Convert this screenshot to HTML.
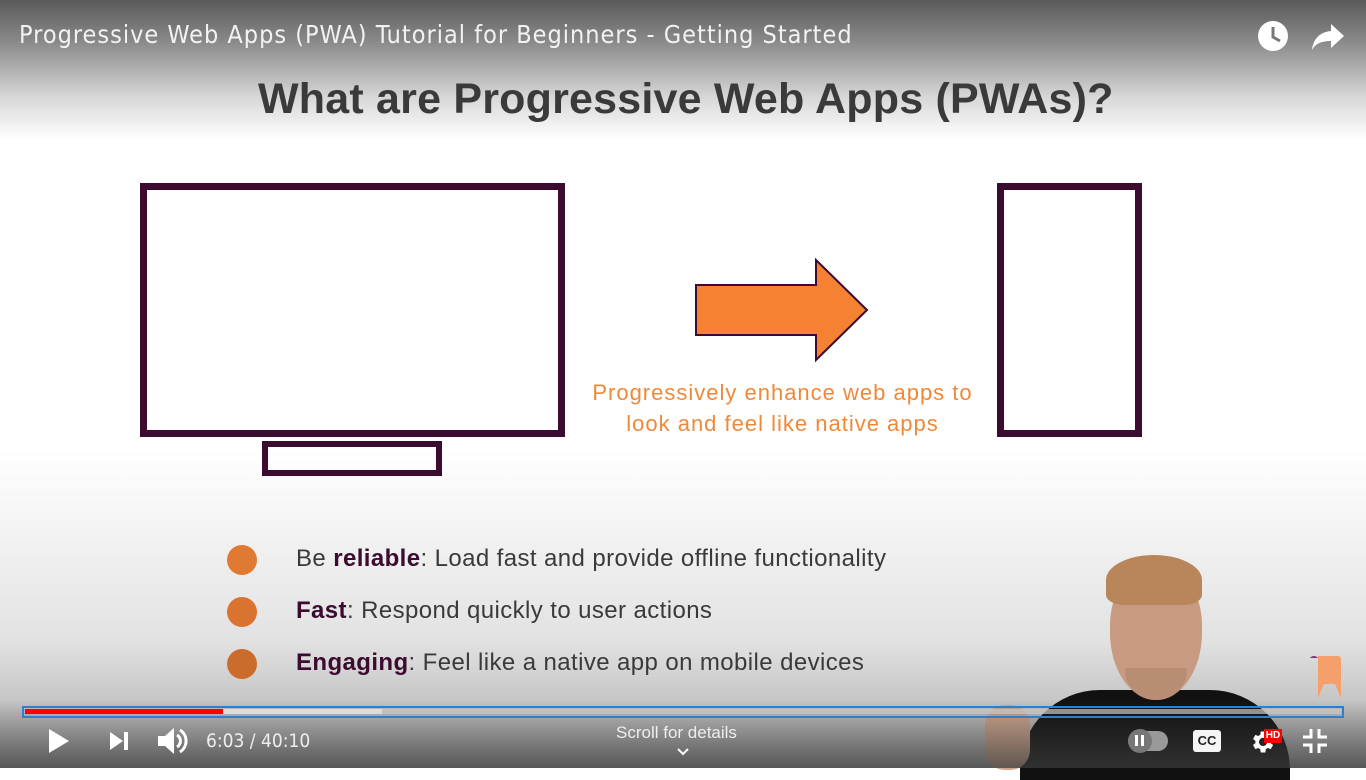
<!DOCTYPE html>
<html><head><meta charset="utf-8"><style>
*{margin:0;padding:0;box-sizing:border-box}
body{width:1366px;height:768px;overflow:hidden;position:relative;background:#fff;font-family:"Liberation Sans",sans-serif}
.abs{position:absolute}
.topg{left:0;top:0;width:1366px;height:140px;background:linear-gradient(#5a5a5a 0%,#8a8a8a 30%,#d8d8d8 70%,rgba(255,255,255,0) 100%)}
.slideg{left:0;top:450px;width:1366px;height:318px;background:linear-gradient(rgba(255,255,255,0),#e2e2e2 60%,#c4c4c4 80%,#aaa 100%)}
.botg{left:0;top:700px;width:1366px;height:68px;background:linear-gradient(rgba(60,60,60,0),rgba(60,60,60,.75))}
.title{left:19px;top:20px;color:#f2f2f2;font-size:25px;font-family:"DejaVu Sans Condensed","Liberation Sans",sans-serif;letter-spacing:1px}
h1{position:absolute;left:258px;top:75px;font-size:43px;font-weight:bold;color:#3a3a3a;letter-spacing:0.2px}
.pur{border:7px solid #3b0b30}
.cap{left:540px;width:485px;text-align:center;color:#f0883a;font-size:22px;line-height:31px;top:377px;letter-spacing:1px}
.li{left:296px;font-size:24px;color:#3a3a3a;letter-spacing:0.4px}
.li b{color:#3b0b30}
.dot{left:227px;width:30px;height:30px;border-radius:50%;background:#e07a33}
.ctl{color:#eee;font-size:19px}
</style></head><body>
<div class="abs topg"></div>
<div class="abs slideg"></div>
<div class="abs title">Progressive Web Apps (PWA) Tutorial for Beginners - Getting Started</div>
<svg class="abs" style="left:1256px;top:19px" width="34" height="34" viewBox="0 0 34 34"><circle cx="17" cy="17" r="15" fill="#fff"/><path d="M17 8v10l7 4" stroke="#777" stroke-width="3" fill="none"/></svg>
<svg class="abs" style="left:1311px;top:22px" width="34" height="30" viewBox="0 0 34 30"><path d="M20 2l13 12-13 12v-7C10 19 4 22 1 28 2 18 8 10 20 9z" fill="#fff"/></svg>
<h1>What are Progressive Web Apps (PWAs)?</h1>
<div class="abs pur" style="left:140px;top:183px;width:425px;height:254px"></div>
<div class="abs" style="left:262px;top:441px;width:180px;height:35px;border:6px solid #3b0b30"></div>
<div class="abs pur" style="left:997px;top:183px;width:145px;height:254px"></div>
<svg class="abs" style="left:695px;top:258px" width="175" height="105" viewBox="0 0 175 105"><path d="M1 27h120V2l51 50-51 50V77H1z" fill="#f58233" stroke="#3b0b30" stroke-width="2"/></svg>
<div class="abs cap">Progressively enhance web apps to<br>look and feel like native apps</div>
<div class="abs dot" style="top:545px"></div>
<div class="abs dot" style="top:597px;background:#d9732f"></div>
<div class="abs dot" style="top:649px;background:#cc6c2c"></div>
<div class="abs li" style="top:545px">Be <b>reliable</b>: Load fast and provide offline functionality</div>
<div class="abs li" style="top:597px"><b>Fast</b>: Respond quickly to user actions</div>
<div class="abs li" style="top:649px"><b>Engaging</b>: Feel like a native app on mobile devices</div>
<!-- person -->
<div class="abs" style="left:1020px;top:690px;width:270px;height:90px;background:#111;border-radius:80px 80px 0 0"></div>
<div class="abs" style="left:1110px;top:565px;width:92px;height:135px;background:#c89a82;border-radius:45% 45% 50% 50%"></div>
<div class="abs" style="left:1106px;top:555px;width:96px;height:50px;background:#b8865a;border-radius:50% 50% 20% 20%"></div>
<div class="abs" style="left:1125px;top:668px;width:62px;height:32px;background:#b48a70;border-radius:0 0 30px 30px;opacity:.8"></div>
<div class="abs" style="left:985px;top:705px;width:45px;height:65px;background:#d0a68d;border-radius:20px"></div>
<svg class="abs" style="left:1308px;top:653px" width="36" height="46" viewBox="0 0 36 46"><path d="M2 5a5 5 0 0 1 8 0z" fill="#7b3a7a"/><path d="M10 3h20a3 3 0 0 1 3 3v39l-6-14h-11l-6 14z" fill="#f5a06a"/></svg>
<div class="abs botg"></div>
<!-- progress -->
<div class="abs" style="left:22px;top:706px;width:1322px;height:12px;border:2px solid #2f7fcf"></div>
<div class="abs" style="left:25px;top:709px;width:1316px;height:5px;background:rgba(200,200,200,.7)"></div>
<div class="abs" style="left:25px;top:709px;width:357px;height:5px;background:#ddd"></div>
<div class="abs" style="left:25px;top:709px;width:198px;height:5px;background:#f00"></div>
<svg class="abs" style="left:47px;top:728px" width="24" height="26"><path d="M2 1l20 12-20 12z" fill="#fff"/></svg>
<svg class="abs" style="left:108px;top:731px" width="24" height="20"><path d="M2 1l13 9-13 9z M16 1h4v18h-4z" fill="#fff"/></svg>
<svg class="abs" style="left:156px;top:726px" width="34" height="30"><path d="M2 10h7l9-8v26l-9-8H2z" fill="#fff"/><path d="M21 9a7 7 0 0 1 0 12M24 4a13 13 0 0 1 0 22" stroke="#fff" stroke-width="3" fill="none"/></svg>
<div class="abs ctl" style="left:206px;top:730px;font-family:'DejaVu Sans Condensed','Liberation Sans',sans-serif;font-size:19px">6:03 / 40:10</div>
<div class="abs ctl" style="left:616px;top:723px;font-size:17px">Scroll for details</div>
<svg class="abs" style="left:676px;top:747px" width="14" height="10"><path d="M2 2l5 5 5-5" stroke="#fff" stroke-width="2" fill="none"/></svg>
<div class="abs" style="left:1128px;top:731px;width:40px;height:20px;border-radius:10px;background:#999"></div>
<div class="abs" style="left:1128px;top:729px;width:24px;height:24px;border-radius:50%;background:#777"></div>
<div class="abs" style="left:1135px;top:735px;width:3px;height:11px;background:#fff;box-shadow:6px 0 #fff"></div>
<div class="abs" style="left:1193px;top:730px;width:28px;height:22px;border-radius:3px;background:#f5f5f5;color:#222;font-weight:bold;font-size:13px;text-align:center;line-height:22px">CC</div>
<svg class="abs" style="left:1248px;top:728px" width="28" height="28" viewBox="0 0 24 24"><path fill="#fff" d="M19.4 13a7.5 7.5 0 0 0 0-2l2.1-1.6-2-3.5-2.5 1a7 7 0 0 0-1.7-1L14.9 3h-4l-.4 2.9a7 7 0 0 0-1.7 1l-2.5-1-2 3.5L6.4 11a7.5 7.5 0 0 0 0 2l-2.1 1.6 2 3.5 2.5-1a7 7 0 0 0 1.7 1l.4 2.9h4l.4-2.9a7 7 0 0 0 1.7-1l2.5 1 2-3.5zM12.9 15.5a3.5 3.5 0 1 1 0-7 3.5 3.5 0 0 1 0 7z"/></svg>
<div class="abs" style="left:1264px;top:729px;width:18px;height:14px;background:#f00;color:#fff;font-size:10px;font-weight:bold;line-height:14px;text-align:center">HD</div>
<svg class="abs" style="left:1302px;top:728px" width="26" height="26"><path d="M9 1v8H1M17 1v8h8M9 25v-8H1M17 25v-8h8" stroke="#fff" stroke-width="3" fill="none"/></svg>
</body></html>
